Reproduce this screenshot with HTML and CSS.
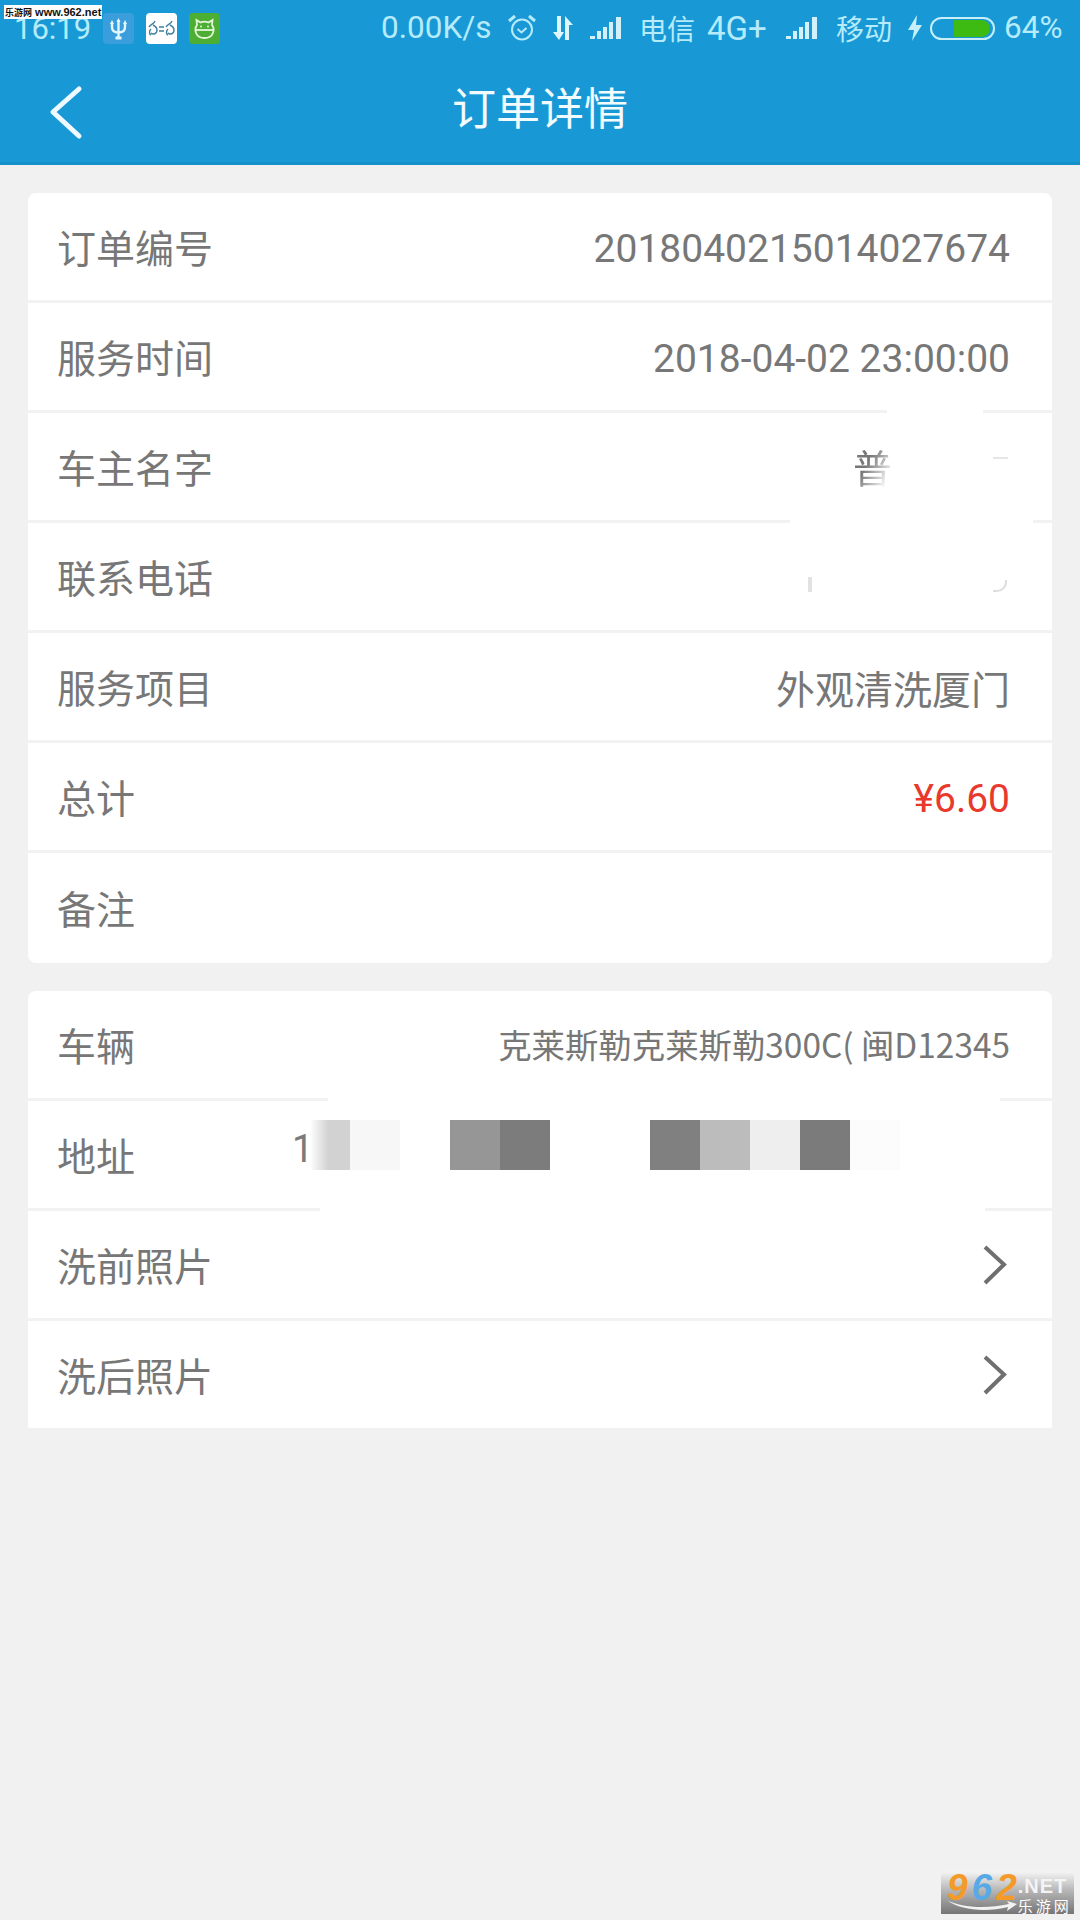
FILE: index.html
```html
<!DOCTYPE html>
<html lang="zh-CN">
<head>
    <meta charset="UTF-8">
    <meta name="viewport" content="width=device-width, initial-scale=1.0">
    <title>订单详情</title>
    <link rel="stylesheet" href="styles.css">
</head>
<body>

<div class="site-mark"><span class="site-cn">乐游网</span> www.962.net</div>

<header class="top">
    <div class="status">
        <span class="clock">16:19</span>
        <span class="app-icon app-usb">
            <svg width="31" height="31" viewBox="0 0 31 31" fill="none" stroke="#e4f6fc" stroke-width="2.400"><path d="M15.500 7V25M9 10V14C9 18 12 19.500 15.500 19.500S22 18 22 14V10"/><path d="M7 11L9 7L11 11ZM13.500 9L15.500 5L17.500 9ZM20 11L22 7L24 11Z" fill="#e4f6fc" stroke="none"/><path d="M12.500 25H18.500" stroke-width="3"/></svg>
        </span>
        <span class="app-icon app-bike">
            <svg width="31" height="31" viewBox="0 0 31 31" fill="none" stroke="#3f7f9f" stroke-width="1.400"><path d="M3 14C5 11 8 11 9 8M7 12C9 13 11 14 11 17C11 21 7 22 5 20M5 16C3 18 3 21 5 22"/><path d="M13 14H18M13 18H18"/><path d="M20 14C22 11 25 11 26 8M24 12C26 13 28 14 28 17C28 21 24 22 22 20M22 16C20 18 20 21 22 22"/></svg>
        </span>
        <span class="app-icon app-cat">
            <svg width="31" height="31" viewBox="0 0 31 31" fill="none" stroke="#e4f6d8" stroke-width="1.800"><path d="M8 12L7.500 7L11.500 9.500C13.500 8.700 17.500 8.700 19.500 9.500L23.500 7L23 12C26 16 25 25 15.500 25S5 16 8 12Z"/><path d="M6.500 17H24.500"/><circle cx="12" cy="13.500" r="1" fill="#e4f6d8" stroke="none"/><circle cx="19" cy="13.500" r="1" fill="#e4f6d8" stroke="none"/></svg>
        </span>

        <span class="speed">0.00K/s</span>
        <svg class="alarm" width="32" height="30" viewBox="0 0 30 30" fill="none" stroke="#b5ebfa" stroke-width="2"><circle cx="15" cy="16.500" r="10"/><path d="M10.500 16L14.500 19.500L19.500 15"/><path d="M2 8L8 3M28 8L22 3" stroke-width="3"/></svg>
        <svg class="arrows" width="24" height="26" viewBox="0 0 22 26" fill="#dff6fc"><path d="M5 1H9V17H12L7 25L1 17H5Z"/><path d="M13 25V1L21 10H17V25Z"/></svg>
        <svg class="signal" width="35" height="24" viewBox="0 0 35 24" fill="#d3f1fa"><path d="M1 20H6V23H1ZM8 15H12V23H8ZM14 11H18V23H14ZM20 6H24V23H20ZM27 1H32V23H27Z"/></svg>
        <span class="carrier">电信</span>
        <span class="net">4G+</span>
        <svg class="signal signal-b" width="35" height="24" viewBox="0 0 35 24" fill="#d3f1fa"><path d="M1 20H6V23H1ZM8 15H12V23H8ZM14 11H18V23H14ZM20 6H24V23H20ZM27 1H32V23H27Z"/></svg>
        <span class="carrier carrier-b">移动</span>
        <svg class="bolt" width="16" height="26" viewBox="0 0 16 26" fill="#c6effa"><path d="M10 0L1 15H7L5 26L15 10H9Z"/></svg>
        <span class="battery"><span class="battery-fill"></span></span>
        <span class="percent">64%</span>
    </div>

    <nav class="nav">
        <a class="back">
            <svg width="36" height="56" viewBox="0 0 36 56" fill="none" stroke="#eefaff" stroke-width="5" stroke-linecap="round" stroke-linejoin="round"><path d="M31 4L5 27L31 51"/></svg>
        </a>
        <h1>订单详情</h1>
    </nav>
</header>

<main>
    <section class="card">
        <div class="row"><span class="label">订单编号</span><span class="value num">2018040215014027674</span></div>
        <div class="row"><span class="label">服务时间</span><span class="value num">2018-04-02 23:00:00</span></div>
        <div class="row">
            <span class="label">车主名字</span>
            <span class="value name-blur">普</span>
            <span class="patch patch-name"></span>
            <span class="smudge smudge-name"></span>
        </div>
        <div class="row">
            <span class="label">联系电话</span>
            <span class="patch patch-phone"></span>
            <span class="smudge smudge-phone-a"></span>
            <span class="smudge smudge-phone-b"></span>
        </div>
        <div class="row"><span class="label">服务项目</span><span class="value">外观清洗厦门</span></div>
        <div class="row"><span class="label">总计</span><span class="value total num">¥6.60</span></div>
        <div class="row"><span class="label">备注</span></div>
    </section>

    <section class="card card-b">
        <div class="row"><span class="label">车辆</span><span class="value small">克莱斯勒克莱斯勒300C( 闽D12345</span></div>
        <div class="row">
            <span class="label">地址</span>
            <div class="mosaic">
                <span class="first-digit">1</span>
                <i class="cell c-d0"></i><i class="cell c-f7"></i><i class="cell"></i>
                <i class="cell c-96"></i><i class="cell c-7c"></i><i class="cell"></i><i class="cell"></i>
                <i class="cell c-80"></i><i class="cell c-bc"></i><i class="cell c-ee"></i>
                <i class="cell c-7b"></i><i class="cell c-fc"></i>
            </div>
            <span class="patch patch-address-top"></span>
            <span class="patch patch-address"></span>
        </div>
        <div class="row">
            <span class="label">洗前照片</span>
            <svg class="more" width="26" height="40" viewBox="0 0 26 40" fill="none" stroke="#6f6f6f" stroke-width="4"><path d="M3 2L22 19.500L3 38"/></svg>
        </div>
        <div class="row">
            <span class="label">洗后照片</span>
            <svg class="more" width="26" height="40" viewBox="0 0 26 40" fill="none" stroke="#6f6f6f" stroke-width="4"><path d="M3 2L22 19.500L3 38"/></svg>
        </div>
    </section>
</main>

<div class="logo-mark">
    <span class="logo-num"><b class="o">9</b><b class="b">6</b><b class="o">2</b></span>
    <span class="logo-side"><span class="logo-net">.NET</span><span class="logo-cn">乐游网</span></span>
    <svg class="logo-swoosh" width="70" height="12" viewBox="0 0 70 12" fill="#f2f2f2"><path d="M0 0C14 8 40 9 62 4L60 1L70 4L60 11L61 7C40 12 14 11 0 0Z"/></svg>
</div>

</body>
</html>
```

FILE: styles.css
```css
body {
    position: relative;
    width: 1080px;
    height: 1920px;
    margin: 0;
    overflow: hidden;
    background-color: #f1f1f1;
    font-family: "Noto Sans CJK SC", Roboto, sans-serif;
}

/* top bar */
.top {
    height: 165px;
    background-color: #1899d6;
    border-bottom: 3px solid #1590c8;
    box-sizing: border-box;
}
.status {
    display: flex;
    align-items: center;
    height: 56px;
    color: #b5ebfa;
    font-size: 28px;
    line-height: 1;
}
.clock {
    width: 74px;
    margin-left: 14px;
    font-family: Roboto, sans-serif;
    font-size: 31px;
}
.app-icon {
    display: flex;
    width: 31px;
    height: 31px;
    margin-left: 12px;
    border-radius: 4px;
}
.clock + .app-icon {
    margin-left: 15px;
}
.app-usb { background-color: #3a9edc; }
.app-bike { background-color: #ffffff; }
.app-cat { background-color: #4cae32; }
.speed {
    width: 110px;
    margin-left: 161px;
    font-family: Roboto, sans-serif;
    font-size: 31.5px;
    white-space: nowrap;
}
.alarm { margin-left: 15px; }
.arrows { margin-left: 13px; }
.signal { margin-left: 14px; }
.signal-b { margin-left: 17px; }
.carrier { margin-left: 15px; }
.carrier-b { margin-left: 16px; }
.net {
    width: 61px;
    margin-left: 12px;
    font-family: Roboto, sans-serif;
    font-size: 33px;
}
.bolt { margin-left: 15px; }
.battery {
    display: flex;
    justify-content: flex-end;
    align-items: center;
    width: 65px;
    height: 23px;
    margin-left: 7px;
    padding-right: 3px;
    box-sizing: border-box;
    border: 2px solid #c6effa;
    border-radius: 12px;
}
.battery-fill {
    width: 36px;
    height: 17px;
    border-radius: 0 9px 9px 0;
    background-color: #3dbb12;
}
.percent {
    margin-left: 9px;
    font-family: Roboto, sans-serif;
    font-size: 31.5px;
}

.nav {
    position: relative;
    display: flex;
    align-items: center;
    justify-content: center;
    height: 106px;
}
.nav h1 {
    margin: 0 0 6px;
    font-size: 44px;
    font-weight: 400;
    color: #f2fbfe;
}
.back {
    position: absolute;
    left: 48px;
    top: 29px;
    display: flex;
}

/* cards */
.card {
    margin: 28px 28px 0;
    background-color: #ffffff;
    border-radius: 8px;
    overflow: hidden;
}
.card-b {
    border-radius: 8px 8px 2px 2px;
}
.row {
    position: relative;
    display: flex;
    align-items: center;
    justify-content: space-between;
    height: 107px;
    padding: 0 42px 0 29px;
    border-bottom: 3px solid #f2f2f2;
    color: #777777;
    font-size: 39px;
}
.row:last-child {
    height: 110px;
    border-bottom: none;
}
.card-b .row:last-child {
    height: 107px;
}
.label {
    margin-bottom: 2px;
    white-space: nowrap;
}
.value {
    white-space: nowrap;
}
.num {
    padding-top: 4px;
    font-family: Roboto, "Noto Sans CJK SC", sans-serif;
}
.total {
    color: #e8392c;
}
.small {
    margin-bottom: 2px;
    font-size: 33.4px;
}
.name-blur {
    margin-right: 118px;
    margin-bottom: 2px;
    -webkit-mask-image: linear-gradient(120deg, #000 40%, transparent 85%);
    mask-image: linear-gradient(120deg, #000 40%, transparent 85%);
}

/* white smudges from the blurring, they cover the dividers */
.patch {
    position: absolute;
    height: 3px;
    background-color: #ffffff;
}
.patch-name {
    left: 859px;
    top: -3px;
    width: 96px;
}
.patch-phone {
    left: 762px;
    top: -3px;
    width: 243px;
}
.patch-address-top {
    left: 300px;
    top: -3px;
    width: 672px;
}
.patch-address {
    left: 292px;
    bottom: -3px;
    width: 665px;
}
.smudge {
    position: absolute;
    box-sizing: border-box;
}
.smudge-name {
    left: 965px;
    top: 44px;
    width: 15px;
    height: 2px;
    background-color: #e6e6e6;
}
.smudge-phone-a {
    left: 780px;
    top: 54px;
    width: 4px;
    height: 15px;
    background-color: #e2e2e2;
}
.smudge-phone-b {
    left: 965px;
    top: 57px;
    width: 14px;
    height: 12px;
    border-right: 2px solid #dddddd;
    border-bottom: 2px solid #dddddd;
    border-radius: 0 0 10px 0;
}

.mosaic {
    position: absolute;
    left: 272px;
    top: 19px;
    display: flex;
    align-items: flex-start;
}
.first-digit {
    position: absolute;
    left: -8px;
    top: 7px;
    font-family: Roboto, sans-serif;
    font-size: 38px;
    line-height: 44px;
    color: #7a7a7a;
}
.cell {
    position: relative;
    display: block;
    width: 50px;
    height: 50px;
}
.cell:first-of-type {
    width: 40px;
    margin-left: 10px;
}
.c-d0 { background: linear-gradient(90deg, #ffffff, #d2d2d2 45%); }
.c-f7 { background-color: #f7f7f7; }
.c-96 { background-color: #969696; }
.c-7c { background-color: #7c7c7c; }
.c-80 { background-color: #808080; }
.c-bc { background-color: #bcbcbc; }
.c-ee { background-color: #eeeeee; }
.c-7b { background-color: #7b7b7b; }
.c-fc { background-color: #fcfcfc; }

.more {
    margin-right: 2px;
}

/* watermarks */
.site-mark {
    position: absolute;
    left: 4px;
    top: 5px;
    z-index: 2;
    width: 98px;
    height: 14px;
    background-color: #ffffff;
    color: #111111;
    font-family: "Liberation Sans", "Noto Sans CJK SC", sans-serif;
    font-size: 11px;
    font-weight: 700;
    line-height: 14px;
    white-space: nowrap;
    overflow: hidden;
}
.site-cn {
    font-size: 9px;
    margin-left: 1px;
}
.logo-mark {
    position: absolute;
    left: 941px;
    top: 1870px;
    display: flex;
    width: 133px;
    height: 44px;
    box-sizing: border-box;
    padding-left: 6px;
    background: linear-gradient(#f2f2f2 5%, #b8b8b8 45%, #757575 100%);
    font-family: "Liberation Sans", sans-serif;
}
.logo-num {
    font-size: 37px;
    line-height: 36px;
    font-style: italic;
    letter-spacing: 4px;
}
.logo-num b.o { color: #f39a28; }
.logo-num b.b { color: #58a9e6; }
.logo-side {
    display: flex;
    flex-direction: column;
    margin-left: -3px;
    color: #ffffff;
}
.logo-net {
    margin-top: 6px;
    font-size: 20px;
    font-weight: 700;
    line-height: 20px;
    letter-spacing: 1px;
    color: #f4f4f4;
}
.logo-cn {
    font-family: "Noto Sans CJK SC", sans-serif;
    font-size: 15px;
    line-height: 20px;
    letter-spacing: 3px;
}
.logo-swoosh {
    position: absolute;
    left: 6px;
    top: 30px;
}
```
